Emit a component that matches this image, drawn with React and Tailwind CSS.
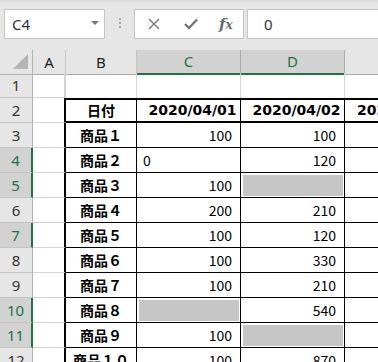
import React from 'react';

const rows = [
  { n: 3, b: '商品１', c: '100', d: '100' },
  { n: 4, b: '商品２', c: '0', cText: true, d: '120' },
  { n: 5, b: '商品３', c: '100', d: null },
  { n: 6, b: '商品４', c: '200', d: '210' },
  { n: 7, b: '商品５', c: '100', d: '120' },
  { n: 8, b: '商品６', c: '100', d: '330' },
  { n: 9, b: '商品７', c: '100', d: '210' },
  { n: 10, b: '商品８', c: null, d: '540' },
  { n: 11, b: '商品９', c: '100', d: null },
  { n: 12, b: '商品１０', c: '100', d: '870' },
];

const selectedRows = [4, 5, 7, 10, 11];

const uiFont = { fontFamily: '"Noto Sans", "Open Sans", sans-serif' };
const cellFont = { fontFamily: '"Noto Sans CJK JP", "Liberation Sans", sans-serif' };
const dateFont = { fontFamily: '"DejaVu Sans", "Noto Sans CJK JP", sans-serif' };

const cols = 'grid grid-cols-[33px_33px_71px_104px_104px_104px]';

function RowHeader({ n }) {
  const sel = selectedRows.includes(n);
  return (
    <div
      style={uiFont}
      className={`flex h-[25px] items-center justify-center border-b border-b-[#c4c4c4] text-[15px] ${
        sel
          ? 'border-r-2 border-r-[#217346] bg-[#d2d2d2] text-[#217346]'
          : 'border-r border-r-[#b4b4b4] bg-[#e6e6e6] text-[#333]'
      }`}
    >
      {n}
    </div>
  );
}

function Gray() {
  return (
    <div className="h-full w-full pt-[2px] pr-px pb-px pl-[2px]">
      <div className="h-full w-full bg-[#c6c6c6]" />
    </div>
  );
}

function NumCell({ value, text }) {
  if (value === null) {
    return (
      <div className="h-[25px] border-r border-b border-black">
        <Gray />
      </div>
    );
  }
  return (
    <div
      style={cellFont}
      className={`flex h-[25px] items-center border-r border-b border-black text-[14px] text-black ${
        text ? 'justify-start pl-[6px]' : 'justify-end pr-[8px]'
      }`}
    >
      {value}
    </div>
  );
}

export default function App() {
  return (
    <div className="h-[362px] w-[378px] overflow-hidden bg-white">
      {/* formula bar */}
      <div className="relative flex h-[50px] items-start bg-gradient-to-b from-[#d9d9d9] via-[#e6e6e6] via-[8%] to-[#e6e6e6] pt-[9px]">
        <div
          style={uiFont}
          className="ml-[4px] flex h-[30px] w-[101px] items-center justify-between border border-[#c6c6c6] bg-white pl-[7px] pr-[5px] text-[15px] text-[#333]"
        >
          <span>C4</span>
          <svg width="8" height="5" viewBox="0 0 8 5" className="mb-[2px]">
            <path d="M0 0 L8 0 L4 4 Z" fill="#777" />
          </svg>
        </div>
        <div className="ml-[14px] mt-[9px] flex flex-col gap-[2px]">
          <span className="h-[2px] w-[2px] bg-[#a6a6a6]" />
          <span className="h-[2px] w-[2px] bg-[#a6a6a6]" />
          <span className="h-[2px] w-[2px] bg-[#a6a6a6]" />
        </div>
        <div className="ml-[13px] flex h-[30px] w-[110px] items-center border border-[#c6c6c6] bg-white">
          <svg width="12" height="12" viewBox="0 0 12 12" className="ml-[13px]">
            <path d="M1 1 L11 11 M11 1 L1 11" stroke="#777" strokeWidth="1.4" />
          </svg>
          <svg width="14" height="12" viewBox="0 0 14 12" className="ml-[24px]">
            <path d="M1 6 L5 10 L13 1.5" stroke="#777" strokeWidth="2.4" fill="none" />
          </svg>
          <span
            style={{ fontFamily: '"DejaVu Serif", "Liberation Serif", serif' }}
            className="ml-[21px] text-[15px] font-bold italic leading-none text-[#6a6a6a]"
          >
            f<span className="text-[12px]">x</span>
          </span>
        </div>
        <div
          style={uiFont}
          className="ml-[3px] flex h-[30px] flex-1 items-center border border-r-0 border-[#c6c6c6] bg-white pl-[16px] text-[15px] text-[#333]"
        >
          0
        </div>
      </div>

      {/* column headers */}
      <div className={`${cols} h-[23px]`} style={uiFont}>
        <div className="relative border-r border-b border-[#b4b4b4] bg-[#e6e6e6]">
          <svg width="17" height="16" viewBox="0 0 17 16" className="absolute left-[12px] top-[4px]">
            <path d="M1 15 L16 0 L16 15 Z" fill="#b4b4b4" />
          </svg>
        </div>
        <div className="flex items-center justify-center border-r border-b border-r-[#c6c6c6] border-b-[#ababab] bg-[#e6e6e6] text-[15px] text-[#222]">
          A
        </div>
        <div className="flex items-center justify-center border-r border-b border-r-[#c6c6c6] border-b-[#ababab] bg-[#e6e6e6] text-[15px] text-[#222]">
          B
        </div>
        <div className="flex items-center justify-center border-r border-b-2 border-r-[#ababab] border-b-[#217346] bg-[#d2d2d2] text-[15px] text-[#217346]">
          C
        </div>
        <div className="flex items-center justify-center border-r border-b-2 border-r-[#ababab] border-b-[#217346] bg-[#d2d2d2] text-[15px] text-[#217346]">
          D
        </div>
        <div className="border-b border-b-[#ababab] bg-[#e6e6e6]" />
      </div>

      {/* row 1 */}
      <div className={cols}>
        <RowHeader n={1} />
        <div className="border-r-2 border-b border-r-[#d4d4d4] border-b-[#d4d4d4]" />
        <div className="border-r border-r-[#d4d4d4]" />
        <div className="border-r border-r-[#d4d4d4]" />
        <div className="border-r border-r-[#d4d4d4]" />
        <div />
      </div>

      {/* row 2 */}
      <div className={cols}>
        <RowHeader n={2} />
        <div className="border-r-2 border-b border-r-black border-b-[#d4d4d4]" />
        <div
          style={cellFont}
          className="flex h-[25px] items-center justify-center border-t-2 border-r border-b-2 border-black text-[14px] font-bold text-black"
        >
          日付
        </div>
        <div
          style={dateFont}
          className="flex items-center justify-center overflow-hidden whitespace-nowrap border-t-2 border-r border-b-2 border-black pl-[8px] text-[14px] font-bold text-black"
        >
          2020/04/01
        </div>
        <div
          style={dateFont}
          className="flex items-center justify-center overflow-hidden whitespace-nowrap border-t-2 border-r border-b-2 border-black pl-[8px] text-[14px] font-bold text-black"
        >
          2020/04/02
        </div>
        <div
          style={dateFont}
          className="flex items-center justify-center overflow-hidden whitespace-nowrap border-t-2 border-b-2 border-black pl-[8px] text-[14px] font-bold text-black"
        >
          2020/04/03
        </div>
      </div>

      {rows.map((r) => (
        <div key={r.n} className={cols}>
          <RowHeader n={r.n} />
          <div className="border-r-2 border-b border-r-black border-b-[#d4d4d4]" />
          <div
            style={cellFont}
            className="flex h-[25px] items-center justify-center whitespace-nowrap border-r border-b border-black text-[14px] font-bold text-black"
          >
            {r.b}
          </div>
          <NumCell value={r.c} text={r.cText} />
          <NumCell value={r.d} />
          <div className="h-[25px] border-b border-black" />
        </div>
      ))}
    </div>
  );
}
